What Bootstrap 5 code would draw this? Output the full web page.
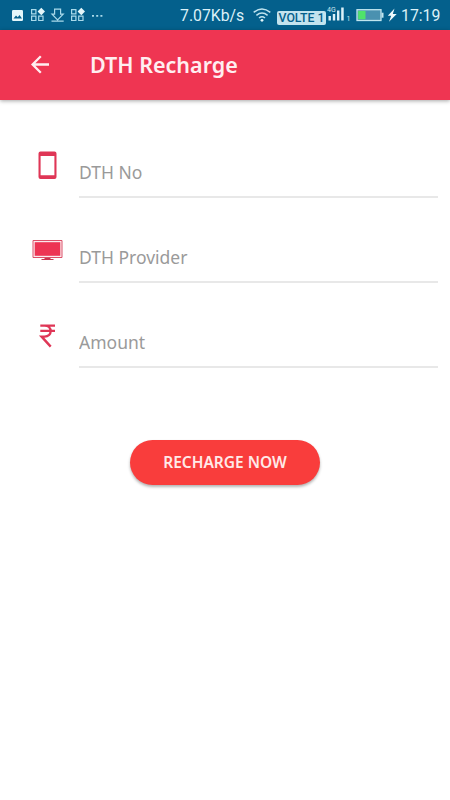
<!DOCTYPE html>
<html lang="en">
<head>
<meta charset="utf-8">
<meta name="viewport" content="width=device-width, initial-scale=1">
<title>DTH Recharge</title>
<link href="https://cdn.jsdelivr.net/npm/bootstrap@5.3.0/dist/css/bootstrap.min.css" rel="stylesheet">
<style>
body{font-family:"Noto Sans","Open Sans",sans-serif;height:800px;overflow:hidden;background:#fff}
svg{display:block;flex:none}
.status{height:30px;background:#04608c;color:#dcf1f8;font:15.8px/30px Roboto,sans-serif;padding-left:11px}
.status .speed{margin-left:76px;width:65px;padding-top:1px;white-space:nowrap}
.status .clock{margin-left:4px;padding-top:1px;white-space:nowrap}
.volte{width:49px;height:14px;margin:6px 0 0 6px;background:#c3e3ee;color:#04608c;border-radius:2px;font:500 12.3px/14px Roboto,sans-serif;text-align:center;white-space:nowrap}
.appbar{height:70px;background:#ef3552;color:#ffeef0;padding-left:30px;box-shadow:0 1px 4px rgba(0,0,0,.35)}
.appbar h1{font-size:21.5px;font-weight:600;line-height:30px;margin-left:40px;white-space:nowrap}
.fields{padding:42px 12px 0 32px}
.entry{height:85px}
.entry .glyph{width:31px;margin-right:16px}
.entry input{height:56px;padding:6px 0 0;border:0;border-bottom:2px solid #e8e8e8;border-radius:0;font-size:17.5px;background:none;box-shadow:none!important}
.entry input::placeholder{color:#9a9a9a;opacity:1}
.go,.go:hover{width:190px;height:45px;background:#f93d3c;color:#ffe9e8;font-size:15.5px;font-weight:600;white-space:nowrap;padding:0;border:0;box-shadow:0 2px 3px rgba(0,0,0,.3)}
.go{margin-top:43px}
</style>
<script src="https://cdn.jsdelivr.net/npm/bootstrap@5.3.0/dist/js/bootstrap.bundle.min.js"></script>
</head>
<body>
<div class="status d-flex align-items-center">
  <svg width="93" height="30" viewBox="11 0 93 30" fill="none" stroke="#a9d9ea" stroke-width="1.2">
    <rect x="12" y="10" width="11" height="11" rx="1.2" fill="#e4f6fa" stroke="none"/><path d="M13.5 18.5l2.5-3 1.800 1.800 1.700-2.300 2.500 3.500z" fill="#04608c" stroke="none"/>
    <g id="apps"><path d="M31.600 9.600h4.300v4.300h-4.300zM31.600 16.200h4.300v4.300h-4.300zM38.700 16.200H43v4.300h-4.300z"/><path d="M41.300 7.800l3.700 3.700-3.700 3.700-3.700-3.700z" fill="#e4f6fa" stroke="none"/></g>
    <use href="#apps" x="40"/>
    <path d="M54.600 9.200h6v5h2.600l-5.600 5.600-5.600-5.600h2.600zM51.500 21.200h12.200"/>
    <path d="M92 15.800h2M96.200 15.800h2M100.400 15.800h2" stroke-width="1.800"/>
  </svg>
  <span class="speed">7.07Kb/s</span>
  <svg class="ms-2" width="18" height="30" viewBox="0 0 18 30" fill="none" stroke="#bfe3ef" stroke-width="1.500"><path d="M.7 12.400q8.300-6.700 16.600 0M3.400 15.300q5.600-4.400 11.200 0M6 18q3-2.300 6 0"/><circle cx="9" cy="20.300" r="1.400" fill="#e4f6fa" stroke="none"/></svg>
  <span class="volte">VOLTE 1</span>
  <svg width="71" height="30" viewBox="326 0 71 30">
    <text x="327" y="12" font-family="Roboto" font-size="7" fill="#cfeaf3">4G</text>
    <path d="M328.500 16h2.400v4.500h-2.400zM332.800 14h2.400v6.500h-2.400zM337 10.500h2.400v10H337zM341.200 7.500h2.500v13h-2.500z" fill="#dcf1f8"/>
    <text x="346.500" y="20.500" font-family="Roboto" font-size="7" fill="#cfeaf3">1</text>
    <rect x="357" y="9.700" width="24" height="10.800" fill="#4a91b0" stroke="#c0e5ef" stroke-width="1.300"/><path d="M358.200 10.900h7.300v8.400h-7.300z" fill="#4fe36a"/><path d="M381.500 12.700h2v5h-2z" fill="#c0e5ef"/>
    <path d="M394.500 8.500l-6.700 7.200h3.400l-2.200 6 7.700-7.700h-3.900z" fill="#eefafc"/>
  </svg>
  <span class="clock">17:19</span>
</div>
<header class="appbar d-flex align-items-center">
  <svg width="20" height="20" viewBox="0 0 20 20" fill="none" stroke="#ffeef0" stroke-width="2.300"><path d="M19 9.500H2.500M10.800 1.300L2.600 9.500l8.200 8.200"/></svg>
  <h1 class="mb-0">DTH Recharge</h1>
</header>
<main>
  <form>
    <div class="fields">
      <div class="entry d-flex">
        <svg class="glyph" height="56" viewBox="0 0 31 56"><path fill-rule="evenodd" fill="#df3656" d="M8.500 9.500h14q2 0 2 2v23.500q0 2-2 2h-14q-2 0-2-2V11.500q0-2 2-2zM8.600 14v19.200h13.800V14z"/></svg>
        <input class="form-control" type="text" placeholder="DTH No" aria-label="DTH No">
      </div>
      <div class="entry d-flex">
        <svg class="glyph" height="56" viewBox="0 0 31 56"><path fill="#fbeaed" stroke="#dc5069" stroke-width="1" d="M1 13.500h29v17H1z"/><path fill="#ed3453" d="M2.700 15.200h25.600v13.600H2.700z"/><path fill="#c93650" d="M12.500 31h6v1h3v1H9.500v-1h3z"/></svg>
        <input class="form-control" type="text" placeholder="DTH Provider" aria-label="DTH Provider">
      </div>
      <div class="entry d-flex">
        <svg class="glyph" height="56" viewBox="0 0 31 56" fill="none" stroke="#df3656" stroke-width="2.400"><path d="M8.300 13.600h14.700M8.300 18.900h14.700M8.300 13.600h4.200c8.200 0 8.200 11 0 11H9.600L18.700 34.600"/></svg>
        <input class="form-control" type="text" placeholder="Amount" aria-label="Amount">
      </div>
    </div>
    <div class="text-center"><button type="button" class="btn rounded-pill go">RECHARGE NOW</button></div>
  </form>
</main>
</body>
</html>
